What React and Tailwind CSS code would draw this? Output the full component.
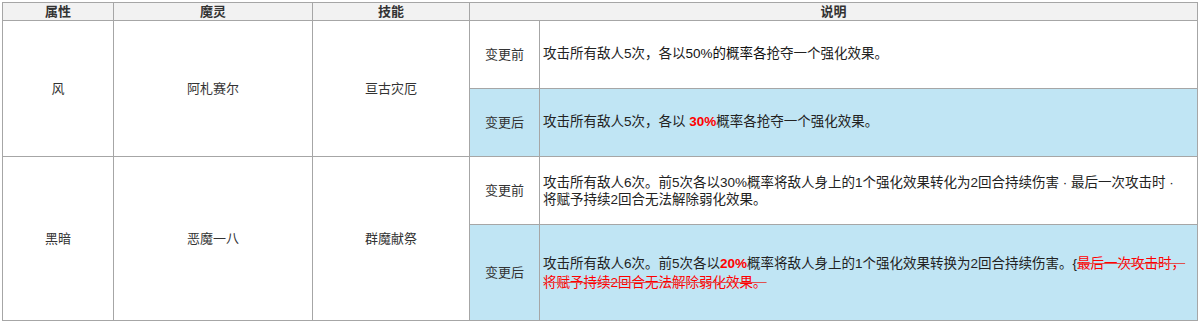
import React from 'react';

const font = { fontFamily: '"Liberation Sans", "Noto Sans CJK SC", sans-serif' };

const cell = 'border border-[#a6a6a6] text-[13px] text-[#333]';
const desc = 'border border-[#a6a6a6] text-[13.5px] text-[#222] pl-[3px]';

export default function App() {
  return (
    <div className="w-[1200px] h-[323px] bg-white pt-[2px] pl-[2px]" style={font}>
      <table className="table-fixed border-collapse w-[1195px]">
        <colgroup>
          <col className="w-[111px]" />
          <col className="w-[199px]" />
          <col className="w-[157px]" />
          <col className="w-[70px]" />
          <col className="w-[658px]" />
        </colgroup>
        <thead>
          <tr className="h-[18px] bg-[#f2f2f2]">
            <th className={`${cell} font-bold text-[#111] leading-[16px] p-0`}>属性</th>
            <th className={`${cell} font-bold text-[#111] leading-[16px] p-0`}>魔灵</th>
            <th className={`${cell} font-bold text-[#111] leading-[16px] p-0`}>技能</th>
            <th colSpan={2} className={`${cell} font-bold text-[#111] leading-[16px] p-0`}>说明</th>
          </tr>
        </thead>
        <tbody>
          <tr className="h-[68px]">
            <td rowSpan={2} className={`${cell} text-center`}>风</td>
            <td rowSpan={2} className={`${cell} text-center`}>阿札赛尔</td>
            <td rowSpan={2} className={`${cell} text-center`}>亘古灾厄</td>
            <td className={`${cell} text-center`}>变更前</td>
            <td className={desc}>
              攻击所有敌人5次，各以<span className="text-[#111]">50%的概率各</span>抢夺一个强化效果。
            </td>
          </tr>
          <tr className="h-[68px] bg-[#c0e5f4]">
            <td className={`${cell} text-center`}>变更后</td>
            <td className={desc}>
              攻击所有敌人5次，各以 <span className="text-[#ff0000] font-bold">30%</span>概率各抢夺一个强化效果。
            </td>
          </tr>
          <tr className="h-[68px]">
            <td rowSpan={2} className={`${cell} text-center`}>黑暗</td>
            <td rowSpan={2} className={`${cell} text-center`}>恶魔一八</td>
            <td rowSpan={2} className={`${cell} text-center`}>群魔献祭</td>
            <td className={`${cell} text-center`}>变更前</td>
            <td className={`${desc} leading-[17px]`}>
              攻击所有敌人6次。前5次各以30%概率将敌人身上的1个强化效果转化为2回合持续伤害 · 最后一次攻击时 ·
              <br />
              将赋予持续2回合无法解除弱化效果。
            </td>
          </tr>
          <tr className="h-[96px] bg-[#c0e5f4]">
            <td className={`${cell} text-center`}>变更后</td>
            <td className={`${desc} leading-[19px]`}>
              攻击所有敌人6次。前5次各以<span className="text-[#ff0000] font-bold">20%</span>概率将敌人身上的1个强化效果转换为2回合持续伤害。{'{'}
              <span className="text-[#ff0000] line-through decoration-[#e05050]">最后一次攻击时，</span>
              <br />
              <span className="text-[#ff0000] line-through decoration-[#e05050]">将赋予持续2回合无法解除弱化效果。</span>
            </td>
          </tr>
        </tbody>
      </table>
    </div>
  );
}
